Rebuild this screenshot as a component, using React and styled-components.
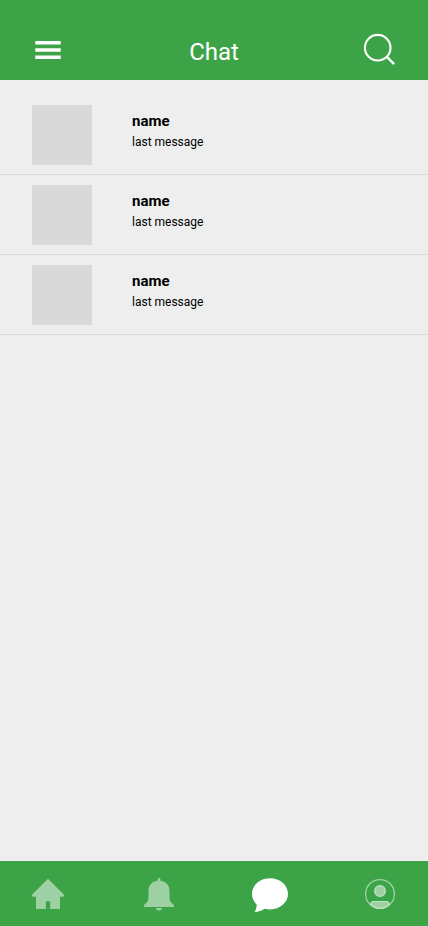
import React from "react";
import styled, { createGlobalStyle } from "styled-components";

const GlobalStyle = createGlobalStyle`
  *, *::before, *::after { box-sizing: border-box; }
  body { margin: 0; background: #eee; font-family: Roboto, sans-serif; }
`;

const Screen = styled.div`
  display: flex;
  flex-direction: column;
  height: 100vh;
  background: #eee;
`;

const Header = styled.header`
  display: flex;
  justify-content: space-between;
  align-items: flex-end;
  flex: none;
  height: 80px;
  padding: 0 28px 10px;
  background: #3ca447;
`;

const Title = styled.h1`
  margin: 0;
  font-size: 24px;
  line-height: 28px;
  padding-bottom: 4px;
  font-weight: 400;
  color: #fff;
`;

const IconButton = styled.button`
  display: block;
  width: 40px;
  height: 40px;
  padding: 0;
  border: 0;
  background: none;
  color: #fff;
`;

const Icon = styled.svg`
  display: block;
  width: 40px;
  height: 40px;
`;

const ChatList = styled.ul`
  flex: 1;
  margin: 0;
  padding: 15px 0 0;
  list-style: none;
`;

const ChatRow = styled.li`
  display: flex;
  align-items: flex-start;
  gap: 40px;
  height: 80px;
  padding: 10px 32px 0;
  border-bottom: 1px solid #d9d9d9;
`;

const Avatar = styled.div`
  width: 60px;
  height: 60px;
  background: #d9d9d9;
`;

const ChatText = styled.div`
  padding-top: 7px;
  color: #000;
`;

const Name = styled.div`
  font-size: 15px;
  line-height: 18px;
  font-weight: 700;
`;

const LastMessage = styled.div`
  margin-top: 5px;
  font-size: 12px;
  line-height: 14px;
`;

const TabBar = styled.nav`
  display: grid;
  grid-template-columns: 111px 111px 110px 40px;
  flex: none;
  height: 65px;
  padding: 13px 28px 0;
  background: #3ca447;
`;

const Tab = styled(IconButton)`
  color: ${({ $active }) => ($active ? "#fff" : "#9dd1a3")};
`;

const chats = [
  { id: 1, name: "name", message: "last message" },
  { id: 2, name: "name", message: "last message" },
  { id: 3, name: "name", message: "last message" },
];

const MenuIcon = () => (
  <Icon viewBox="0 0 40 40" fill="currentColor">
    <path d="M7.3 11h25.4v3.6H7.3zM7.3 18.2h25.4v3.6H7.3zM7.3 25.4h25.4V29H7.3z" />
  </Icon>
);

const SearchIcon = () => (
  <Icon viewBox="0 0 40 40" fill="none" stroke="currentColor">
    <circle cx="17.7" cy="17.7" r="12.8" strokeWidth="2.1" />
    <path d="M26.9 26.9l7.2 7.2" strokeWidth="2.4" />
  </Icon>
);

const HomeIcon = () => (
  <Icon viewBox="0 0 40 40" fill="currentColor">
    <path d="M20 4.8L35.3 20q1.300 1.300.7 2.100-.5.7-1.500.7H32V35h-9.800v-7.800h-4.300V35H8V22.800H5.500q-1 0-1.500-.7-.6-.8.700-2.100z" />
  </Icon>
);

const BellIcon = () => (
  <Icon viewBox="0 0 40 40" fill="currentColor">
    <path d="M18.600 5.400a1.400 1.400 0 0 1 2.800 0v1.300C27.200 7.300 30.500 11.300 30.500 17v5.500c0 4 1 5.800 4.500 8.500v2H5v-2c3.500-2.700 4.500-4.500 4.500-8.500V17C9.500 11.300 12.800 7.300 18.600 6.700zM17 34h6a3 2.400 0 0 1-6 0z" />
  </Icon>
);

const ChatIcon = () => (
  <Icon viewBox="0 0 40 40" fill="currentColor">
    <path d="M20 4.200C29.900 4.200 38 11 38 19.800S29.900 35.400 20 35.400c-2 0-3.400-.2-5-.7-3.300 1.900-6.800 3-10.300 3.200 1.300-2.300 1.900-4.600 2-7.400C3.500 27.500 2 23.900 2 19.800 2 11 10.100 4.200 20 4.200z" />
  </Icon>
);

const ProfileIcon = () => (
  <Icon viewBox="0 0 40 40">
    <circle cx="20" cy="20" r="14.400" fill="none" stroke="#9dd1a3" strokeWidth="1.300" />
    <g fill="#9dd1a3" stroke="#c0e2c4" strokeWidth="1.200">
      <circle cx="20" cy="17" r="5.400" />
      <path d="M13.500 27.500h13q2.300 0 2.800 2.300-3.800 4.500-9.300 4.500t-9.300-4.500q.5-2.300 2.800-2.300z" />
    </g>
  </Icon>
);

const tabs = [
  { label: "Home", Glyph: HomeIcon },
  { label: "Notifications", Glyph: BellIcon },
  { label: "Messages", Glyph: ChatIcon, active: true },
  { label: "Profile", Glyph: ProfileIcon },
];

export default function App() {
  return (
    <Screen>
      <GlobalStyle />
      <Header>
        <IconButton aria-label="Menu"><MenuIcon /></IconButton>
        <Title>Chat</Title>
        <IconButton aria-label="Search"><SearchIcon /></IconButton>
      </Header>
      <ChatList>
        {chats.map((chat) => (
          <ChatRow key={chat.id}>
            <Avatar />
            <ChatText>
              <Name>{chat.name}</Name>
              <LastMessage>{chat.message}</LastMessage>
            </ChatText>
          </ChatRow>
        ))}
      </ChatList>
      <TabBar>
        {tabs.map(({ label, Glyph, active }) => (
          <Tab key={label} aria-label={label} $active={active}><Glyph /></Tab>
        ))}
      </TabBar>
    </Screen>
  );
}
